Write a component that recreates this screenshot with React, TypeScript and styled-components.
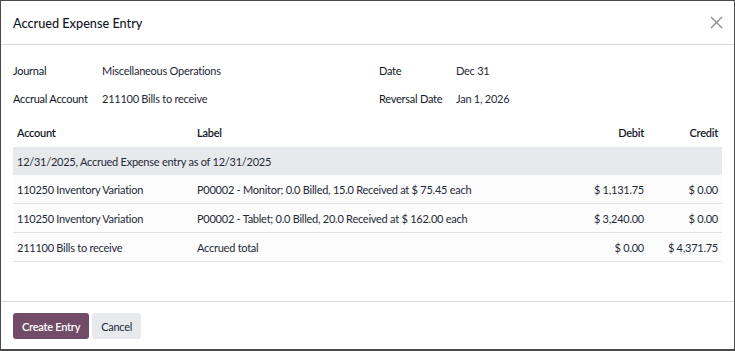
import React from "react";
import styled, { createGlobalStyle } from "styled-components";

const Global = createGlobalStyle`
  html, body { margin: 0; padding: 0; }
  body {
    background: #4a4a4a;
    overflow: hidden;
    font-family: Lato, "Noto Sans", sans-serif;
    color: #212529;
  }
  #root { padding: 1px 1px 0 1px; }
`;

const Dialog = styled.div`
  height: 348px;
  background: #fff;
  display: flex;
  flex-direction: column;
  box-sizing: border-box;
`;

const Header = styled.div`
  height: 44px;
  box-sizing: border-box;
  border-bottom: 1px solid #d8dadd;
  display: flex;
  align-items: center;
  justify-content: space-between;
  padding: 0 11px 0 12px;
`;

const Title = styled.h4`
  margin: 0;
  font-size: 12.7px;
  font-weight: 500;
  color: #111827;
`;

const CloseButton = styled.button`
  border: 0;
  background: none;
  padding: 0;
  width: 13px;
  height: 13px;
  display: flex;
  cursor: pointer;
`;

const Body = styled.div`
  flex: 1;
  padding: 11px 12px 0 12px;
  box-sizing: border-box;
  font-size: 11px;
  letter-spacing: -0.25px;
`;

const InfoGrid = styled.div`
  display: grid;
  grid-template-columns: 366px 1fr;
`;

const InfoRow = styled.div<{ $labelWidth: number }>`
  display: grid;
  grid-template-columns: ${(p) => p.$labelWidth}px 1fr;
  height: 28px;
  align-items: center;
`;

const InfoLabel = styled.span`
  color: #111827;
`;

const InfoValue = styled.span`
  color: #1f2937;
`;

const Table = styled.table`
  width: 100%;
  margin-top: 6px;
  border-collapse: collapse;
  table-layout: fixed;
`;

const Th = styled.th<{ $align?: string; $width?: number }>`
  height: 29px;
  padding: 0 4px;
  text-align: ${(p) => p.$align || "left"};
  font-weight: 600;
  color: #111827;
  ${(p) => (p.$width ? `width: ${p.$width}px;` : "")}
`;

const SectionRow = styled.tr`
  background: #e7e9ed;
`;

const SectionCell = styled.td`
  height: 28px;
  padding: 0 4px;
  color: #1f2937;
`;

const Row = styled.tr`
  background: #fcfcfc;
  border-bottom: 1px solid #dee2e6;
`;

const Td = styled.td<{ $align?: string }>`
  height: 28px;
  padding: 0 4px;
  text-align: ${(p) => p.$align || "left"};
  color: #1f2937;
  white-space: nowrap;
`;

const Footer = styled.div`
  border-top: 1px solid #d8dadd;
  padding: 11px 12px 10px 12px;
  display: flex;
  gap: 3px;
`;

const Button = styled.button<{ $primary?: boolean }>`
  height: 26px;
  padding: 0 9px;
  border: 0;
  border-radius: 3px;
  font-family: Lato, "Noto Sans", sans-serif;
  font-size: 11px;
  letter-spacing: -0.25px;
  font-weight: ${(p) => (p.$primary ? 600 : 400)};
  background: ${(p) => (p.$primary ? "#714b67" : "#e7e9ed")};
  color: ${(p) => (p.$primary ? "#fff" : "#1f2937")};
  cursor: pointer;
`;

const lines = [
  {
    account: "110250 Inventory Variation",
    label: "P00002 - Monitor; 0.0 Billed, 15.0 Received at $ 75.45 each",
    debit: "$ 1,131.75",
    credit: "$ 0.00",
  },
  {
    account: "110250 Inventory Variation",
    label: "P00002 - Tablet; 0.0 Billed, 20.0 Received at $ 162.00 each",
    debit: "$ 3,240.00",
    credit: "$ 0.00",
  },
  {
    account: "211100 Bills to receive",
    label: "Accrued total",
    debit: "$ 0.00",
    credit: "$ 4,371.75",
  },
];

export default function App() {
  return (
    <>
      <Global />
      <Dialog>
        <Header>
          <Title>Accrued Expense Entry</Title>
          <CloseButton aria-label="Close">
            <svg width="13" height="13" viewBox="0 0 13 13">
              <path d="M1 1 L12 12 M12 1 L1 12" stroke="#8a8a8a" strokeWidth="1.3" fill="none" />
            </svg>
          </CloseButton>
        </Header>
        <Body>
          <InfoGrid>
            <div>
              <InfoRow $labelWidth={89}>
                <InfoLabel>Journal</InfoLabel>
                <InfoValue>Miscellaneous Operations</InfoValue>
              </InfoRow>
              <InfoRow $labelWidth={89}>
                <InfoLabel>Accrual Account</InfoLabel>
                <InfoValue>211100 Bills to receive</InfoValue>
              </InfoRow>
            </div>
            <div>
              <InfoRow $labelWidth={77}>
                <InfoLabel>Date</InfoLabel>
                <InfoValue>Dec 31</InfoValue>
              </InfoRow>
              <InfoRow $labelWidth={77}>
                <InfoLabel>Reversal Date</InfoLabel>
                <InfoValue>Jan 1, 2026</InfoValue>
              </InfoRow>
            </div>
          </InfoGrid>
          <Table>
            <thead>
              <tr>
                <Th $width={172}>Account</Th>
                <Th>Label</Th>
                <Th $align="right" $width={72}>Debit</Th>
                <Th $align="right" $width={66}>Credit</Th>
              </tr>
            </thead>
            <tbody>
              <SectionRow>
                <SectionCell colSpan={4}>12/31/2025, Accrued Expense entry as of 12/31/2025</SectionCell>
              </SectionRow>
              {lines.map((l, i) => (
                <Row key={i}>
                  <Td>{l.account}</Td>
                  <Td>{l.label}</Td>
                  <Td $align="right">{l.debit}</Td>
                  <Td $align="right">{l.credit}</Td>
                </Row>
              ))}
            </tbody>
          </Table>
        </Body>
        <Footer>
          <Button $primary>Create Entry</Button>
          <Button>Cancel</Button>
        </Footer>
      </Dialog>
    </>
  );
}
